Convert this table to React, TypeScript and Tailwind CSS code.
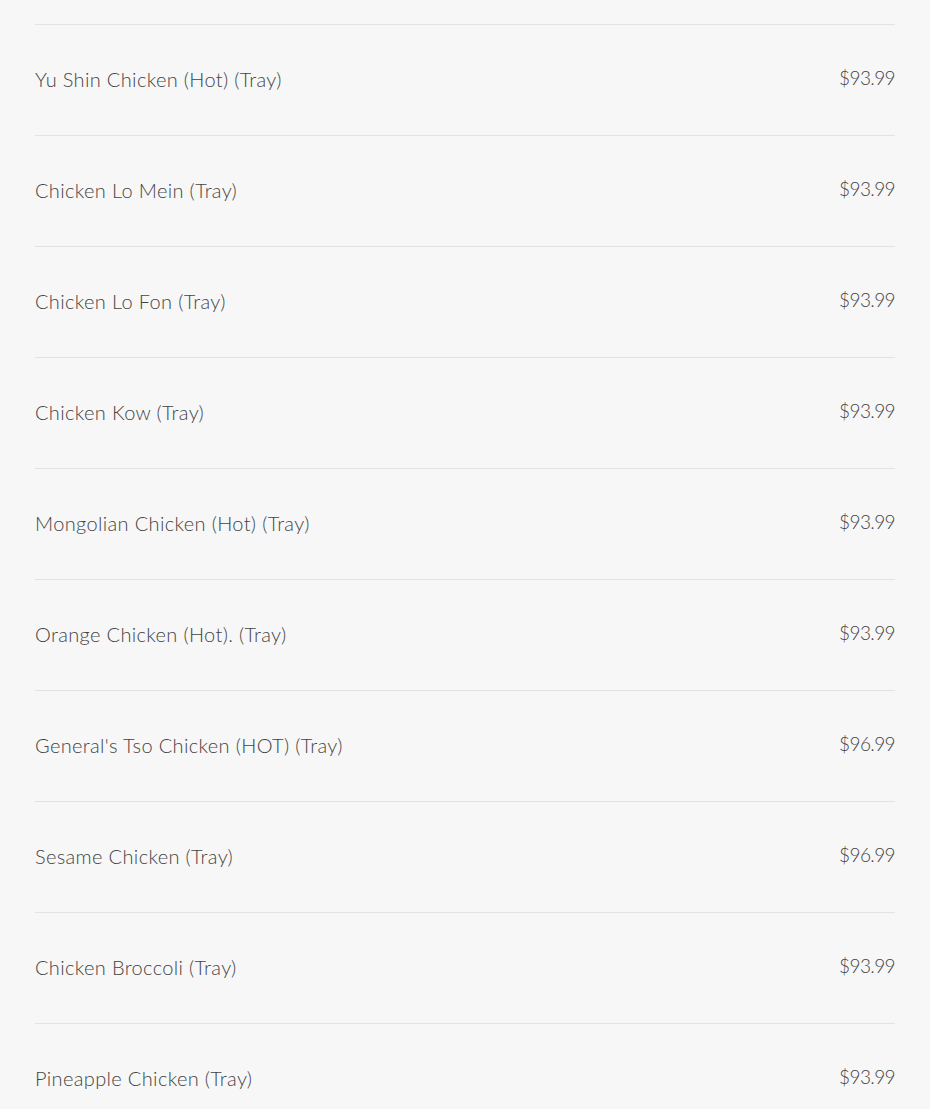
const items = [
  { name: "Yu Shin Chicken (Hot) (Tray)", price: "$93.99" },
  { name: "Chicken Lo Mein (Tray)", price: "$93.99" },
  { name: "Chicken Lo Fon (Tray)", price: "$93.99" },
  { name: "Chicken Kow (Tray)", price: "$93.99" },
  { name: "Mongolian Chicken (Hot) (Tray)", price: "$93.99" },
  { name: "Orange Chicken (Hot). (Tray)", price: "$93.99" },
  { name: "General's Tso Chicken (HOT) (Tray)", price: "$96.99" },
  { name: "Sesame Chicken (Tray)", price: "$96.99" },
  { name: "Chicken Broccoli (Tray)", price: "$93.99" },
  { name: "Pineapple Chicken (Tray)", price: "$93.99" },
];

export default function App() {
  return (
    <div className="min-h-screen h-[1109px] overflow-hidden bg-[#f7f7f7] px-[35px] pt-6 font-['Lato',sans-serif] text-[#444444]">
      {items.map((item) => (
        <div
          key={item.name}
          className="flex h-[111px] items-center justify-between border-t border-[#e3e3e3]"
        >
          <span className="-mt-0.5 text-[20px] font-light tracking-[0.35px]">{item.name}</span>
          <span className="-mt-1 text-[19px] font-light tracking-[-0.6px]">{item.price}</span>
        </div>
      ))}
    </div>
  );
}
